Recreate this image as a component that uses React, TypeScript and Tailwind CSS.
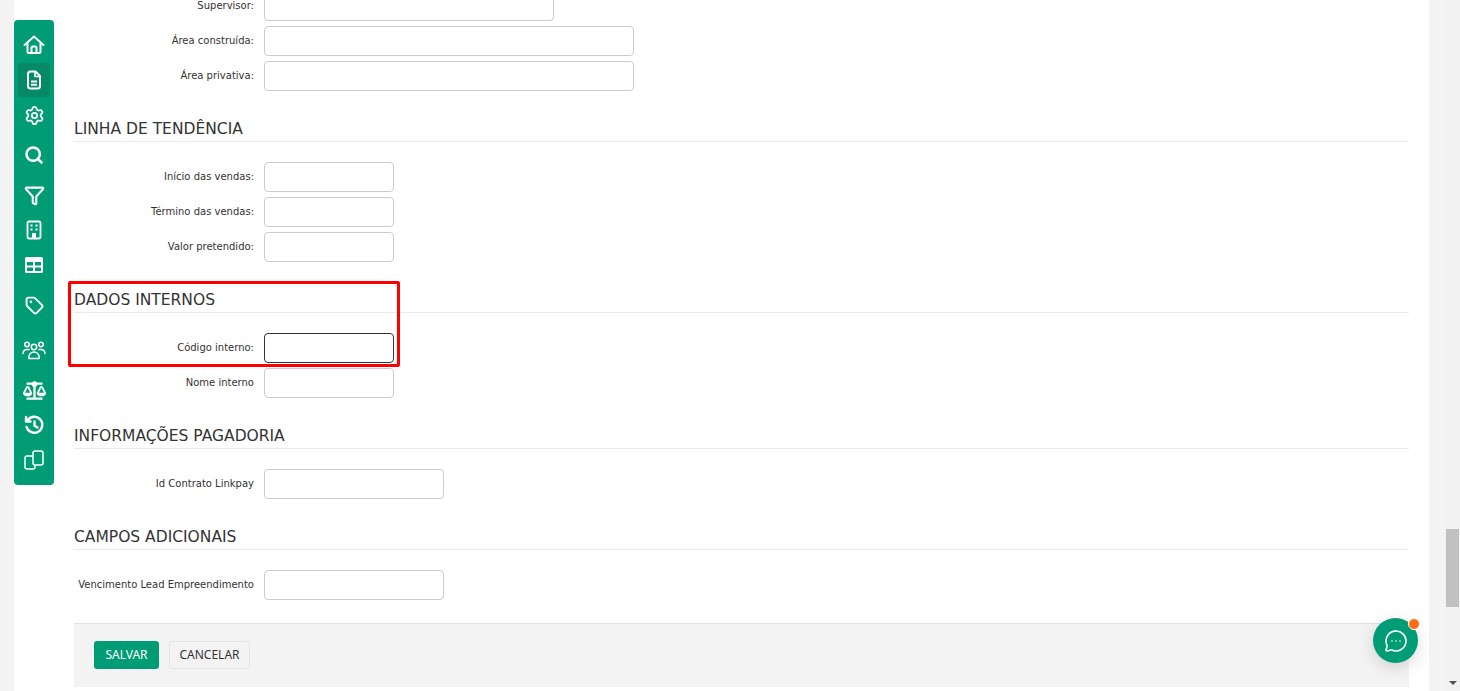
import { Funnel, MessageCircleMore, Search, Settings, Tag } from 'lucide-react';
import { FaBalanceScale } from 'react-icons/fa';
import { ReactNode } from 'react';

function HomeIcon() {
  return (
    <svg width="22" height="20" viewBox="0 0 22 20" fill="none" stroke="white" strokeWidth="2" strokeLinecap="round" strokeLinejoin="round">
      <path d="M1.500 10 11 1.500l9.500 8.500" />
      <path d="M4.500 8v8.500A1.500 1.500 0 0 0 6 18h10a1.500 1.500 0 0 0 1.500-1.500V8" />
      <path d="M8.500 18v-5A1.500 1.500 0 0 1 10 11.500h2a1.500 1.500 0 0 1 1.500 1.500v5" />
    </svg>
  );
}

function DocIcon() {
  return (
    <svg width="20" height="20" viewBox="0 0 20 20" fill="none" stroke="white" strokeWidth="2" strokeLinejoin="round">
      <path d="M4 4a2.500 2.500 0 0 1 2.500-2.500H11.500L16 6v10a2.500 2.500 0 0 1-2.500 2.500h-7A2.500 2.500 0 0 1 4 16z" />
      <path d="M11 2v4.500h5" strokeWidth="1.600" />
      <path d="M7 11.500h6M7 14.800h6" strokeWidth="1.900" />
    </svg>
  );
}

function BuildingIcon() {
  return (
    <svg width="20" height="20" viewBox="0 0 20 20" fill="none">
      <rect x="3.500" y="1.500" width="13" height="17" rx="1.500" stroke="white" strokeWidth="1.800" />
      <path d="M6.500 4.500h2v2h-2zM11.500 4.500h2v2h-2zM6.500 8.500h2v2h-2zM11.500 8.500h2v2h-2zM8 13h4v5H8z" fill="white" />
    </svg>
  );
}

function TableIcon() {
  return (
    <svg width="20" height="20" viewBox="0 0 20 20" fill="white">
      <path d="M2.500 2h15A1.500 1.500 0 0 1 19 3.500v13a1.500 1.500 0 0 1-1.500 1.500h-15A1.500 1.500 0 0 1 1 16.500v-13A1.500 1.500 0 0 1 2.500 2zM3 7v3.500h6V7zm8 0v3.500h6V7zM3 12.500V16h6v-3.500zm8 0V16h6v-3.500z" fillRule="evenodd" />
    </svg>
  );
}

function UsersIcon() {
  return (
    <svg width="24" height="20" viewBox="0 0 24 20" fill="none" stroke="white" strokeWidth="1.500" strokeLinecap="round" strokeLinejoin="round">
      <circle cx="12" cy="7" r="2.700" />
      <path d="M6.800 18.500v-1.300a5.200 5.200 0 0 1 10.400 0v1.300z" />
      <circle cx="5" cy="4.500" r="2.200" />
      <circle cx="19" cy="4.500" r="2.200" />
      <path d="M1 13.500a4.200 4.200 0 0 1 4-4h2" />
      <path d="M23 13.500a4.200 4.200 0 0 0-4-4h-2" />
    </svg>
  );
}

function HistoryIcon() {
  return (
    <svg width="21" height="21" viewBox="0 0 21 21" fill="none" stroke="white" strokeWidth="2.400" strokeLinecap="round" strokeLinejoin="round">
      <path d="M3.500 5.500A8 8 0 1 1 2.600 12" />
      <path d="M2 2v4.500h4.500" />
      <path d="M10.500 6.500v4.200l3 1.800" />
    </svg>
  );
}

function PagesIcon() {
  return (
    <svg width="20" height="20" viewBox="0 0 20 20" fill="none" stroke="white" strokeWidth="1.500" strokeLinejoin="round">
      <rect x="9" y="1" width="10" height="14" rx="2" />
      <path d="M9 6H3a2 2 0 0 0-2 2v9a2 2 0 0 0 2 2h6a2 2 0 0 0 2-2v-2" />
    </svg>
  );
}

const sideItems: { icon: ReactNode; mt: string; active?: boolean }[] = [
  { icon: <HomeIcon />, mt: 'mt-0' },
  { icon: <DocIcon />, mt: 'mt-[1px]', active: true },
  { icon: <Settings size={21} strokeWidth={2} />, mt: 'mt-[1px]' },
  { icon: <Search size={20} strokeWidth={3} />, mt: 'mt-[6px]' },
  { icon: <Funnel size={21} strokeWidth={2.4} />, mt: 'mt-[6px]' },
  { icon: <BuildingIcon />, mt: 'mt-[1px]' },
  { icon: <TableIcon />, mt: 'mt-[1px]' },
  { icon: <Tag size={19} strokeWidth={2.4} />, mt: 'mt-[6px]' },
  { icon: <UsersIcon />, mt: 'mt-[11px]' },
  { icon: <FaBalanceScale size={23} />, mt: 'mt-[6px]' },
  { icon: <HistoryIcon />, mt: 'mt-[1px]' },
  { icon: <PagesIcon />, mt: 'mt-[1px]' },
];

function Sidebar() {
  return (
    <div className="flex h-[465px] w-10 shrink-0 mt-5 flex-col items-center rounded-[4px] bg-[#009c75] pt-2 text-white">
      {sideItems.map((item, i) => (
        <div
          key={i}
          className={`flex h-[34px] w-8 items-center justify-center rounded-[4px] ${item.mt} ${item.active ? 'bg-[#058a68]' : ''}`}
        >
          {item.icon}
        </div>
      ))}
    </div>
  );
}

function Row({ label, width, focused }: { label: string; width: string; focused?: boolean }) {
  return (
    <div className="mb-[5px] flex items-center gap-[10px]">
      <label className="w-[180px] shrink-0 pb-[2px] text-right text-[10px] text-[#333]">{label}</label>
      <div className={`h-[30px] rounded-[4px] border bg-white ${width} ${focused ? 'border-[#333]' : 'border-[#ccc]'}`} />
    </div>
  );
}

function Heading({ children }: { children: ReactNode }) {
  return (
    <div className="mt-[21px] mb-5 h-[30px] border-b border-[#eaeaea] pt-[7px] text-[15.5px] leading-5 text-[#333]">
      {children}
    </div>
  );
}

export default function App() {
  return (
    <div className="flex h-[691px] overflow-hidden bg-[#f4f4f4] font-['DejaVu_Sans',sans-serif]">
      <div className="ml-[14px] flex w-[1415px] shrink-0 bg-white">
        <Sidebar />
        <div className="w-[1335px] shrink-0 ml-5 -mt-[9px]">
          <Row label="Supervisor:" width="w-[290px]" />
          <Row label="Área construída:" width="w-[370px]" />
          <Row label="Área privativa:" width="w-[370px]" />

          <Heading>LINHA DE TENDÊNCIA</Heading>
          <Row label="Início das vendas:" width="w-[130px]" />
          <Row label="Término das vendas:" width="w-[130px]" />
          <Row label="Valor pretendido:" width="w-[130px]" />

          <div className="relative">
            <Heading>DADOS INTERNOS</Heading>
            <Row label="Código interno:" width="w-[130px]" focused />
            <Row label="Nome interno" width="w-[130px]" />
            <div className="absolute left-[-6px] top-[-2px] h-[86px] w-[332px] rounded-[2px] border-[3px] border-[#ff0000]" />
          </div>

          <Heading>INFORMAÇÕES PAGADORIA</Heading>
          <Row label="Id Contrato Linkpay" width="w-[180px]" />

          <Heading>CAMPOS ADICIONAIS</Heading>
          <Row label="Vencimento Lead Empreendimento" width="w-[180px]" />

          <div className="mt-[23px] flex h-[64px] items-start gap-[10px] border-t border-[#e0e0e0] bg-[#f3f3f3] pl-5 pt-[17px] font-['Noto_Sans',sans-serif] text-[12px]">
            <button className="h-7 w-[65px] rounded-[3px] bg-[#009c75] text-white">SALVAR</button>
            <button className="h-7 w-[81px] rounded-[3px] border border-[#e4e4e4] bg-[#f3f3f3] text-[#333]">CANCELAR</button>
          </div>
        </div>
      </div>

      <div className="ml-auto flex w-[15px] flex-col items-center bg-[#f1f1f1]">
        <div className="mt-[529px] h-[78px] w-[13px] bg-[#c1c1c1]" />
        <div className="mt-auto mb-[6px] h-0 w-0 border-x-[4px] border-t-[4px] border-x-transparent border-t-[#505050]" />
      </div>

      <div className="absolute left-[1373px] top-[618px] flex h-[45px] w-[45px] items-center justify-center rounded-full bg-[#009c75] text-white shadow-[0_4px_16px_rgba(0,0,0,0.15)]">
        <MessageCircleMore size={24} strokeWidth={1.6} />
        <span className="absolute right-[-2px] top-0 h-3 w-3 rounded-full border border-white bg-[#ff6b12]" />
      </div>
    </div>
  );
}
